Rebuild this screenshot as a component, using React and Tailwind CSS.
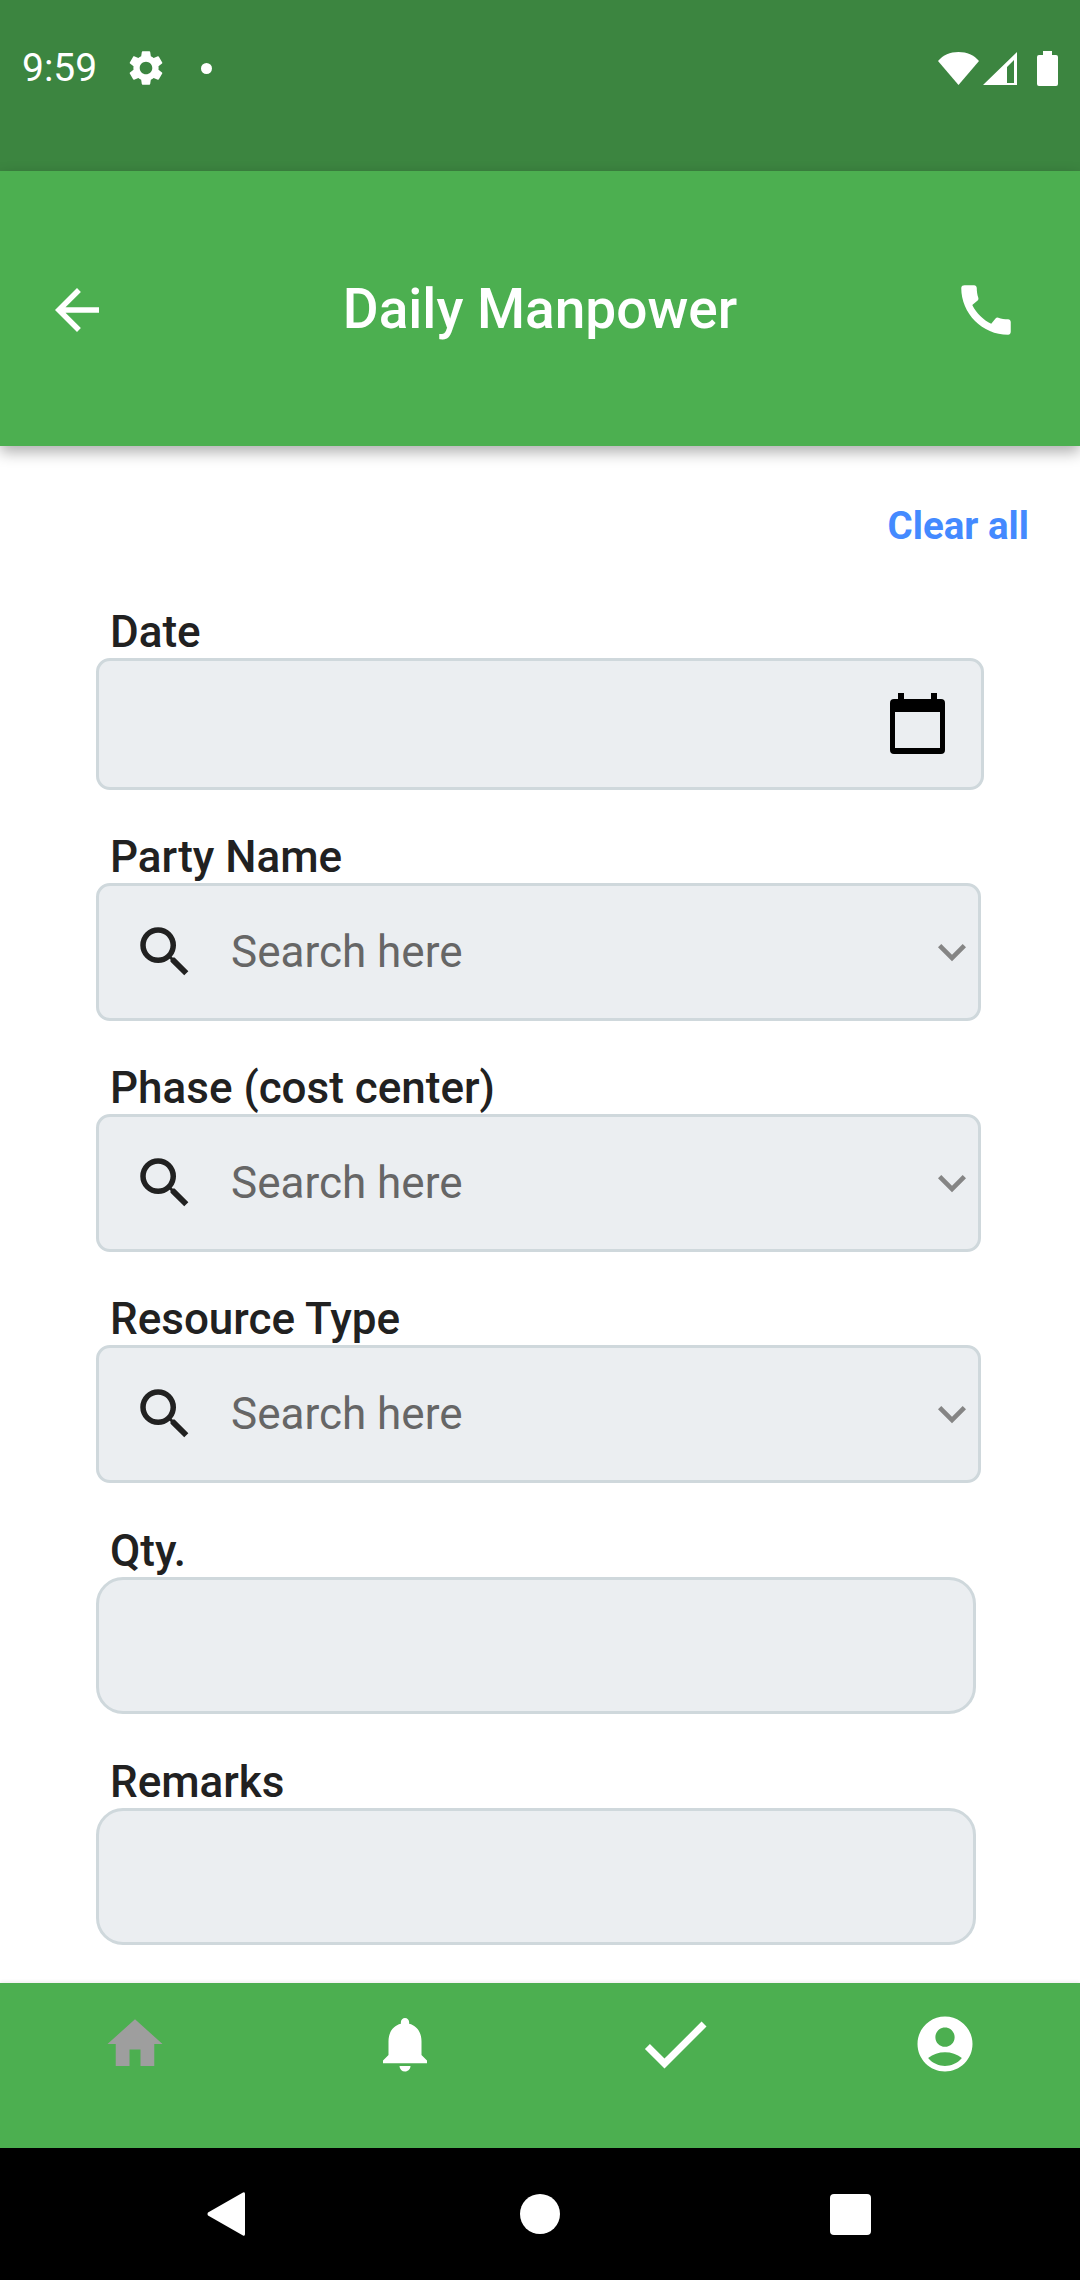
import { MdAccountCircle, MdArrowBack, MdCall, MdCheck, MdHome, MdKeyboardArrowDown, MdNotifications, MdSearch, MdSettings } from 'react-icons/md'

const selects = ['Party Name', 'Phase (cost center)', 'Resource Type']
const plain = ['Qty.', 'Remarks']

function Label({ children }) {
  return <label className="block h-[45px] pl-[14px] text-[44px] leading-[38px] font-medium text-[#212121]">{children}</label>
}

function SelectField({ label }) {
  return (
    <div className="mt-[48px] w-[885px]">
      <Label>{label}</Label>
      <div className="flex h-[138px] items-center rounded-[14px] border-[3px] border-[#cfd8dc] bg-[#ebeef1] pl-[33px]">
        <MdSearch size={66} className="shrink-0 text-[#212121]" />
        <span className="ml-[33px] flex-1 text-[44px] text-[#666666]">Search here</span>
        <MdKeyboardArrowDown size={56} className="-mr-[2px] text-[#858585]" />
      </div>
    </div>
  )
}

export default function App() {
  return (
    <div className="flex h-[2280px] w-[1080px] flex-col overflow-hidden bg-white font-['Roboto',sans-serif]">
      <div className="flex h-[171px] shrink-0 items-start justify-between bg-[#3c8540] pt-[42px] pr-[22px] pl-[22px] text-white">
        <div className="flex h-[52px] items-center">
          <span className="text-[39px] leading-none">9:59</span>
          <MdSettings size={42} className="ml-[28px]" />
          <span className="ml-[34px] h-[11px] w-[11px] rounded-full bg-white" />
        </div>
        <div className="flex h-[52px] items-center">
          <svg width="41" height="33" viewBox="0 0 41 33">
            <path fill="#fff" d="M20.500 33L0 9C5 3 12 0 20.500 0C29 0 36 3 41 9Z" />
          </svg>
          <svg width="34" height="33" viewBox="0 0 34 33" className="ml-[4px]">
            <path fillRule="evenodd" fill="#fff" d="M34 0V33H0ZM31 8V31H24V15Z" />
          </svg>
          <svg width="21" height="35" viewBox="0 0 21 35" className="ml-[20px]">
            <path fill="#fff" d="M6 0H15V4H19Q21 4 21 6V33Q21 35 19 35H2Q0 35 0 33V6Q0 4 2 4H6Z" />
          </svg>
        </div>
      </div>

      <header className="relative z-10 flex h-[275px] shrink-0 items-center justify-between bg-[#4caf50] pt-[2px] pr-[61px] pl-[44px] text-white shadow-[0_6px_14px_rgba(0,0,0,0.32)]">
        <MdArrowBack size={66} />
        <h1 className="flex-1 pl-[17px] text-center text-[55px] font-medium">Daily Manpower</h1>
        <MdCall size={66} />
      </header>

      <main className="min-h-0 flex-1 bg-white">
        <div className="flex justify-end pt-[58px] pr-[51px]">
          <button className="text-[38.5px] leading-[44px] font-bold text-[#448aff]">Clear all</button>
        </div>
        <div className="mt-[65px] pl-[96px]">
          <div className="w-[888px]">
            <Label>Date</Label>
            <div className="flex h-[132px] items-center justify-end rounded-[14px] border-[3px] border-[#cfd8dc] bg-[#ebeef1] pr-[36px] pb-[1px]">
              <svg width="55" height="61" viewBox="0 0 55 61">
                <path fillRule="evenodd" d="M8 0H14V6H41V0H47V6H51Q55 6 55 10V57Q55 61 51 61H4Q0 61 0 57V10Q0 6 4 6H8ZM5 19V55H50V19Z" />
              </svg>
            </div>
          </div>
          {selects.map(label => <SelectField key={label} label={label} />)}
          {plain.map(label => (
            <div key={label} className="mt-[49px] w-[880px]">
              <Label>{label}</Label>
              <div className="h-[137px] rounded-[27px] border-[3px] border-[#cfd8dc] bg-[#ebeef1]" />
            </div>
          ))}
        </div>
      </main>

      <nav className="relative grid h-[165px] shrink-0 grid-cols-4 bg-[#4caf50] pt-[28px] text-white shadow-[0_-1px_4px_rgba(0,0,0,0.08)]">
        <div className="flex justify-center"><MdHome size={66} className="text-[#9e9e9e]" /></div>
        <div className="flex justify-center"><MdNotifications size={66} /></div>
        <div className="flex justify-center"><MdCheck size={84} className="-mt-[9px]" /></div>
        <div className="flex justify-center"><MdAccountCircle size={66} /></div>
      </nav>

      <div className="flex h-[132px] shrink-0 items-center bg-black pl-[207px]">
        <svg width="38" height="44" viewBox="0 0 38 44">
          <path fill="#fff" d="M38 2V42Q38 44.500 36 43.500L1 23.500Q0 22 1 20.500L36 .5Q38 -.5 38 2Z" />
        </svg>
        <span className="ml-[275px] h-[40px] w-[40px] rounded-full bg-white" />
        <span className="ml-[270px] h-[41px] w-[41px] rounded-[4px] bg-white" />
      </div>
    </div>
  )
}
